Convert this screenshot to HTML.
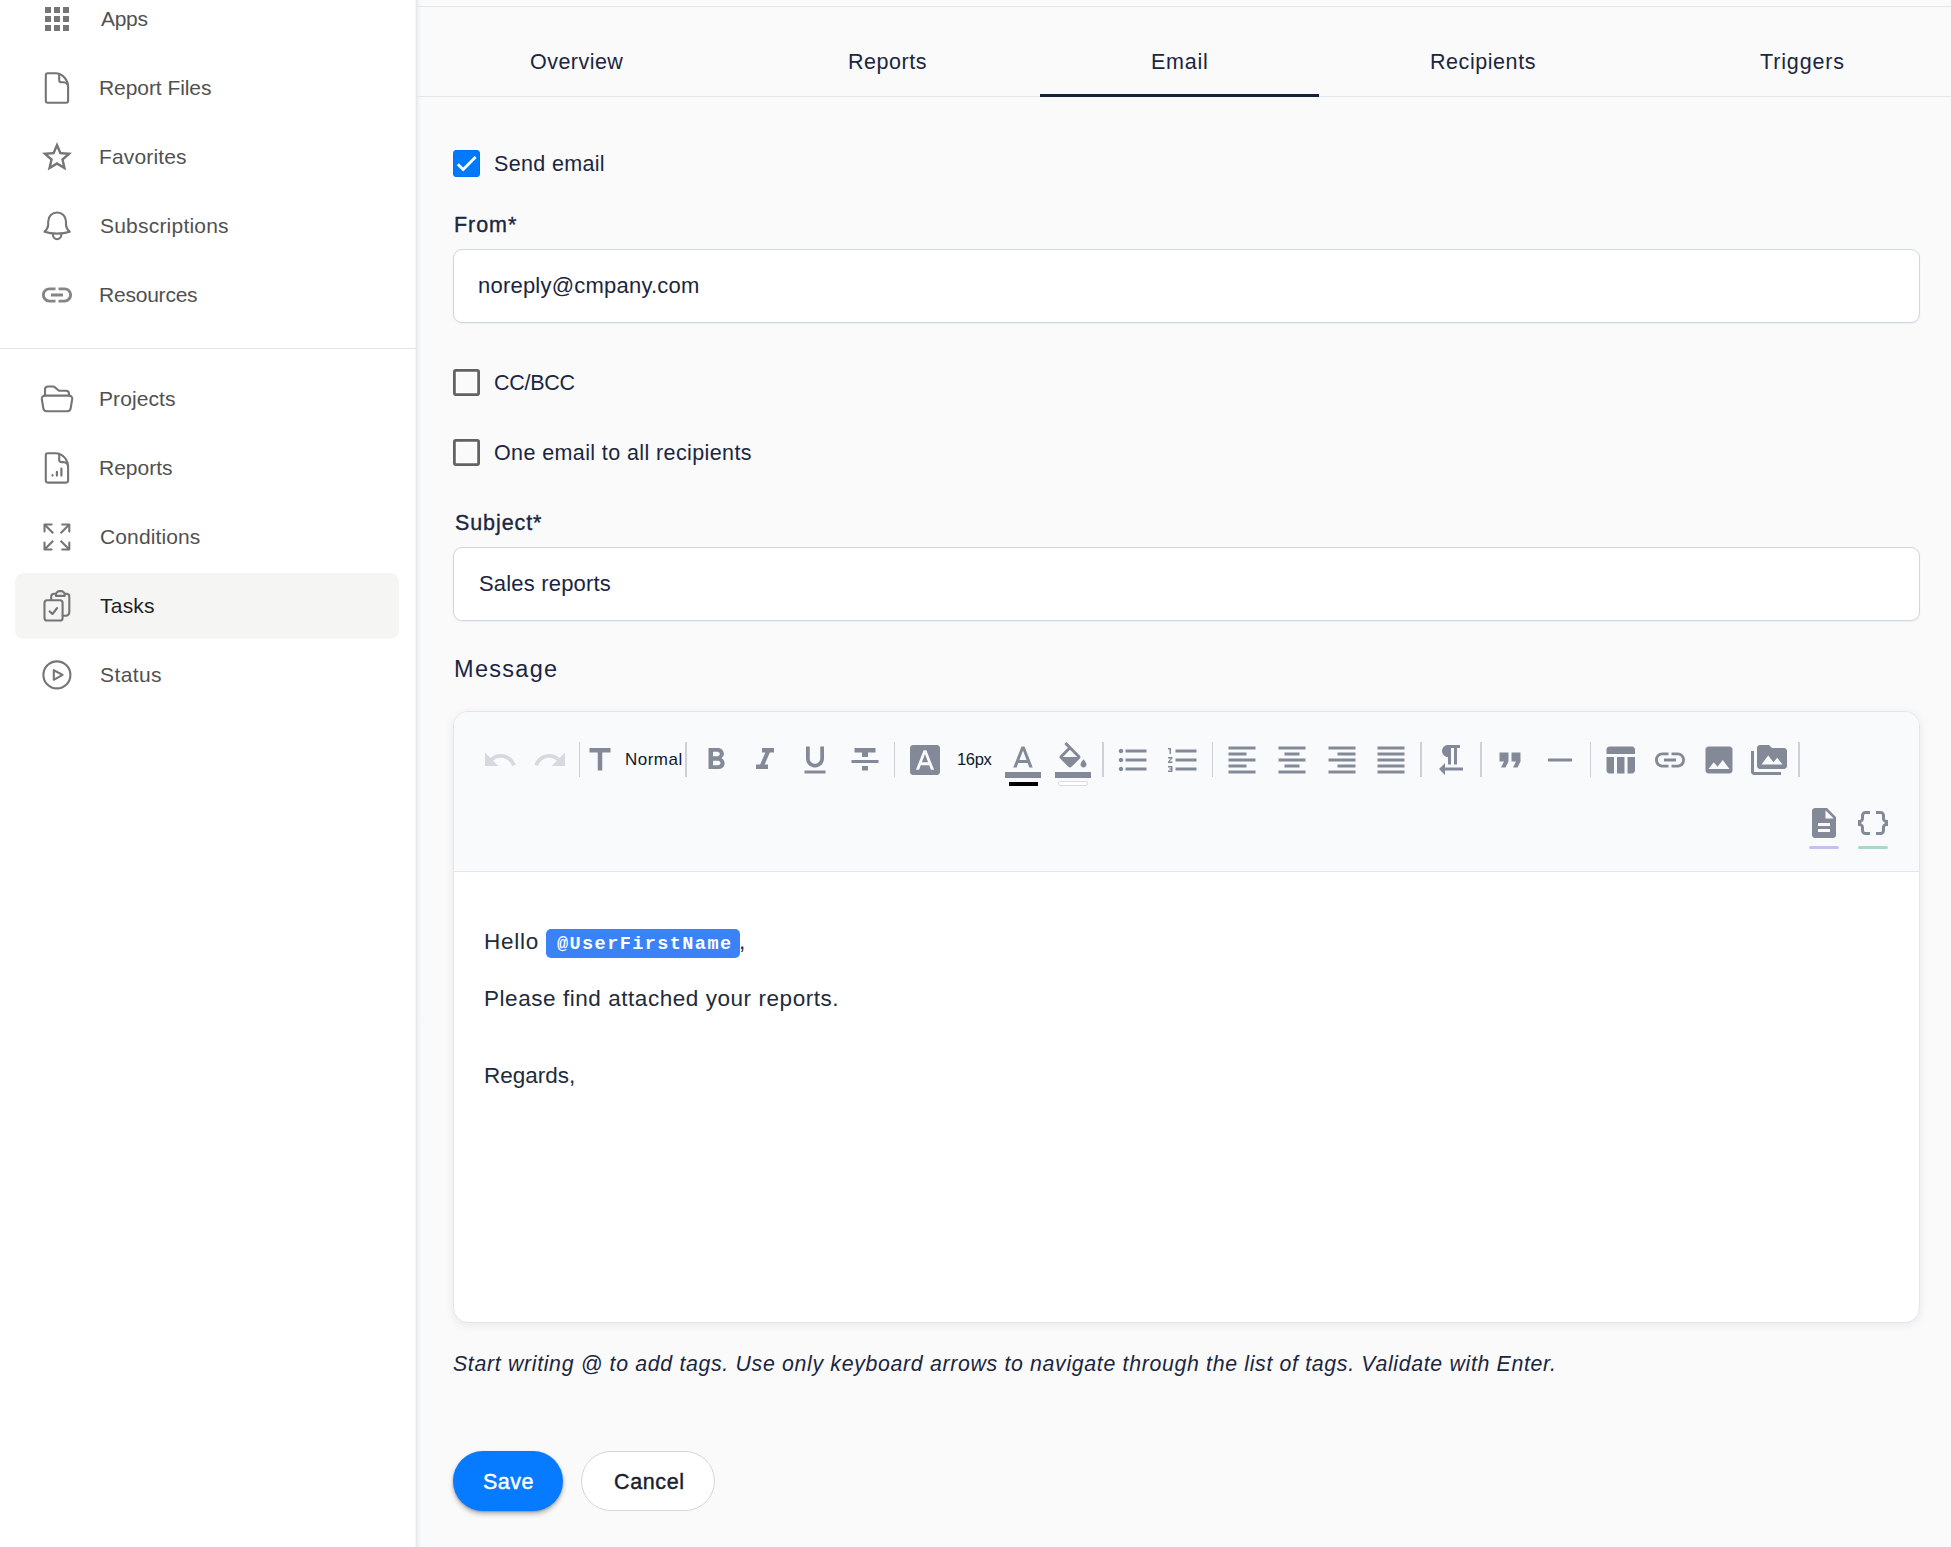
<!DOCTYPE html>
<html lang="en"><head><meta charset="utf-8"><title>Tasks - Email</title>
<style>
html,body{margin:0;padding:0}
body{width:1951px;height:1547px;position:relative;overflow:hidden;background:#fafafa;font-family:"Liberation Sans",sans-serif}
.t{position:absolute;white-space:pre;margin:0}
.ic{position:absolute;display:block;overflow:visible}
.abs{position:absolute;box-sizing:border-box}
.sep{position:absolute;top:742.3px;width:1.5px;height:35px;background:#cdd0d9}
.tag{position:absolute;background:#3b82f6;border-radius:5px}
.cb{position:absolute;box-sizing:border-box;width:27px;height:27px;border:2.2px solid #616161;border-radius:4px}
.inp{position:absolute;box-sizing:border-box;left:453px;width:1467px;height:73.5px;background:#fff;border:1px solid #ced7e4;border-radius:9px;box-shadow:0 1px 2px rgba(30,41,59,.06)}
</style></head><body>
<div class="abs" style="left:0;top:0;width:417px;height:1547px;background:#fff;border-right:1px solid #e2e8f0"></div>
<div class="abs" style="left:415px;top:0;width:1px;height:1547px;background:#f3f6f9"></div>
<div class="abs" style="left:417px;top:0;width:5px;height:1547px;background:linear-gradient(90deg,#eeeeef,#f6f6f6 45%,#fafafa)"></div>
<div class="abs" style="left:15px;top:573px;width:384px;height:66px;background:#f5f5f4;border-radius:8.5px"></div>
<div class="abs" style="left:0;top:348px;width:416px;height:1px;background:#e0e6ef"></div>
<div class="abs" style="left:417px;top:6px;width:1534px;height:1px;background:#e2e7ef"></div>
<div class="abs" style="left:417px;top:96px;width:1534px;height:1px;background:#e2e7ef"></div>
<div class="abs" style="left:1040px;top:94px;width:278.5px;height:3px;background:#16213a"></div>
<div class="abs" style="left:453px;top:150px;width:27px;height:27px;background:#0079fc;border:1.5px solid #0072fa;border-radius:3px"><svg width="27" height="27" viewBox="0 0 27 27" style="display:block;margin:-1.5px"><path d="M4.8 14.3L10.2 19.6L22.6 7.0" fill="none" stroke="#fff" stroke-width="2.8"/></svg></div>
<div class="inp" style="top:249.3px"></div>
<svg class="ic" style="left:453px;top:369px" width="27" height="27" viewBox="0 0 27 27"><rect x="3.4" y="3.4" width="20.2" height="20.2" fill="none" stroke="#fff" stroke-width="1.4"/><rect x="1.38" y="1.38" width="24.24" height="24.24" rx="1.5" fill="none" stroke="#626262" stroke-width="2.76"/></svg>
<svg class="ic" style="left:453px;top:439px" width="27" height="27" viewBox="0 0 27 27"><rect x="3.4" y="3.4" width="20.2" height="20.2" fill="none" stroke="#fff" stroke-width="1.4"/><rect x="1.38" y="1.38" width="24.24" height="24.24" rx="1.5" fill="none" stroke="#626262" stroke-width="2.76"/></svg>
<div class="inp" style="top:547.3px"></div>
<div class="abs" style="left:453px;top:711px;width:1467px;height:611.5px;background:#fff;border:1px solid #e2e6ec;border-radius:15px;box-shadow:0 2px 10px rgba(0,0,0,.075);overflow:hidden"><div style="height:159px;background:#f8fafc;border-bottom:1px solid #e2e6ec"></div></div>
<div class="abs" style="left:453px;top:1451px;width:110px;height:59.7px;background:#077bff;border-radius:30px;box-shadow:0 3px 5px rgba(0,0,0,.28),0 1px 2px rgba(0,0,0,.2)"></div>
<div class="abs" style="left:581.2px;top:1451px;width:133.6px;height:59.7px;background:#fff;border:1px solid #d6d6d6;border-radius:30px"></div>
<div class="t " style="left:101px;top:8px;font-size:21px;line-height:21px;color:#515151;font-family:'Liberation Sans',sans-serif;letter-spacing:-0.30px;">Apps</div>
<div class="t " style="left:99px;top:77px;font-size:21px;line-height:21px;color:#515151;font-family:'Liberation Sans',sans-serif;letter-spacing:-0.07px;">Report Files</div>
<div class="t " style="left:99px;top:146px;font-size:21px;line-height:21px;color:#515151;font-family:'Liberation Sans',sans-serif;letter-spacing:0.15px;">Favorites</div>
<div class="t " style="left:100px;top:215px;font-size:21px;line-height:21px;color:#515151;font-family:'Liberation Sans',sans-serif;letter-spacing:0.21px;">Subscriptions</div>
<div class="t " style="left:99px;top:284px;font-size:21px;line-height:21px;color:#515151;font-family:'Liberation Sans',sans-serif;letter-spacing:-0.22px;">Resources</div>
<div class="t " style="left:99px;top:388px;font-size:21px;line-height:21px;color:#515151;font-family:'Liberation Sans',sans-serif;letter-spacing:0.09px;">Projects</div>
<div class="t " style="left:99px;top:457px;font-size:21px;line-height:21px;color:#515151;font-family:'Liberation Sans',sans-serif;">Reports</div>
<div class="t " style="left:100px;top:526px;font-size:21px;line-height:21px;color:#515151;font-family:'Liberation Sans',sans-serif;letter-spacing:0.12px;">Conditions</div>
<div class="t " style="left:100px;top:595px;font-size:21px;line-height:21px;color:#1f1f1f;font-family:'Liberation Sans',sans-serif;letter-spacing:0.23px;">Tasks</div>
<div class="t " style="left:100px;top:664px;font-size:21px;line-height:21px;color:#515151;font-family:'Liberation Sans',sans-serif;letter-spacing:0.40px;">Status</div>
<div class="t " style="left:530px;top:52px;font-size:21.5px;line-height:21.5px;color:#1b2640;font-family:'Liberation Sans',sans-serif;letter-spacing:0.47px;">Overview</div>
<div class="t " style="left:848px;top:52px;font-size:21.5px;line-height:21.5px;color:#1b2640;font-family:'Liberation Sans',sans-serif;letter-spacing:0.55px;">Reports</div>
<div class="t " style="left:1151px;top:52px;font-size:21.5px;line-height:21.5px;color:#1b2640;font-family:'Liberation Sans',sans-serif;letter-spacing:0.75px;">Email</div>
<div class="t " style="left:1430px;top:52px;font-size:21.5px;line-height:21.5px;color:#1b2640;font-family:'Liberation Sans',sans-serif;letter-spacing:0.56px;">Recipients</div>
<div class="t " style="left:1760px;top:52px;font-size:21.5px;line-height:21.5px;color:#1b2640;font-family:'Liberation Sans',sans-serif;letter-spacing:0.86px;">Triggers</div>
<div class="t " style="left:494px;top:154px;font-size:21.5px;line-height:21.5px;color:#1b2640;font-family:'Liberation Sans',sans-serif;letter-spacing:0.34px;">Send email</div>
<div class="t " style="left:454px;top:215px;font-size:21.5px;line-height:21.5px;color:#1b2640;font-family:'Liberation Sans',sans-serif;letter-spacing:0.95px;-webkit-text-stroke:0.35px #1b2640;">From*</div>
<div class="t " style="left:478px;top:275px;font-size:22px;line-height:22px;color:#1b2640;font-family:'Liberation Sans',sans-serif;letter-spacing:0.22px;">noreply@cmpany.com</div>
<div class="t " style="left:494px;top:373px;font-size:21.5px;line-height:21.5px;color:#1b2640;font-family:'Liberation Sans',sans-serif;letter-spacing:-0.26px;">CC/BCC</div>
<div class="t " style="left:494px;top:443px;font-size:21.5px;line-height:21.5px;color:#1b2640;font-family:'Liberation Sans',sans-serif;letter-spacing:0.39px;">One email to all recipients</div>
<div class="t " style="left:455px;top:513px;font-size:21.5px;line-height:21.5px;color:#1b2640;font-family:'Liberation Sans',sans-serif;letter-spacing:0.91px;-webkit-text-stroke:0.35px #1b2640;">Subject*</div>
<div class="t " style="left:479px;top:573px;font-size:22px;line-height:22px;color:#1b2640;font-family:'Liberation Sans',sans-serif;letter-spacing:0.18px;">Sales reports</div>
<div class="t " style="left:454px;top:658px;font-size:23.5px;line-height:23.5px;color:#1b2640;font-family:'Liberation Sans',sans-serif;letter-spacing:1.30px;">Message</div>
<div class="t " style="left:625px;top:751px;font-size:17px;line-height:17px;color:#0f172a;font-family:'Liberation Sans',sans-serif;letter-spacing:0.48px;">Normal</div>
<div class="t " style="left:957px;top:751px;font-size:16.5px;line-height:16.5px;color:#0f172a;font-family:'Liberation Sans',sans-serif;letter-spacing:-0.33px;">16px</div>
<div class="t " style="left:484px;top:931px;font-size:22.5px;line-height:22.5px;color:#212b3a;font-family:'Liberation Sans',sans-serif;letter-spacing:0.72px;">Hello</div>
<div class="t " style="left:739px;top:931px;font-size:22.5px;line-height:22.5px;color:#212b3a;font-family:'Liberation Sans',sans-serif;">,</div>
<div class="t " style="left:484px;top:988px;font-size:22.5px;line-height:22.5px;color:#212b3a;font-family:'Liberation Sans',sans-serif;letter-spacing:0.55px;">Please find attached your reports.</div>
<div class="t " style="left:484px;top:1065px;font-size:22.5px;line-height:22.5px;color:#212b3a;font-family:'Liberation Sans',sans-serif;">Regards,</div>
<div class="tag" style="left:546px;top:929px;width:194px;height:28.8px"></div>
<div class="t " style="left:557px;top:936px;font-size:18.5px;line-height:18.5px;color:#fff;font-family:'Liberation Mono',monospace;letter-spacing:1.43px;font-weight:bold;">@UserFirstName</div>
<div class="t " style="left:453px;top:1354px;font-size:21.3px;line-height:21.3px;color:#1b2640;font-family:'Liberation Sans',sans-serif;letter-spacing:0.67px;font-style:italic;">Start writing @ to add tags. Use only keyboard arrows to navigate through the list of tags. Validate with Enter.</div>
<div class="t " style="left:483px;top:1472px;font-size:21.5px;line-height:21.5px;color:#fff;font-family:'Liberation Sans',sans-serif;letter-spacing:0.50px;-webkit-text-stroke:0.4px #fff;">Save</div>
<div class="t " style="left:614px;top:1472px;font-size:21.5px;line-height:21.5px;color:#16202f;font-family:'Liberation Sans',sans-serif;letter-spacing:0.64px;-webkit-text-stroke:0.4px #16202f;">Cancel</div>
<svg class="ic" style="left:481.8px;top:742.2px" width="36" height="36" viewBox="0 0 24 24"><path fill="#d6d9df" d="M12.5 8c-2.65 0-5.05.99-6.9 2.6L2 7v9h9l-3.62-3.62c1.39-1.16 3.16-1.88 5.12-1.88 3.54 0 6.55 2.31 7.6 5.5l2.37-.78C21.08 11.03 17.15 8 12.5 8z"/></svg>
<svg class="ic" style="left:531.6px;top:742.2px" width="36" height="36" viewBox="0 0 24 24"><path fill="#d6d9df" d="M18.4 10.6C16.55 8.99 14.15 8 11.5 8c-4.65 0-8.58 3.03-9.96 7.22L3.9 16c1.05-3.19 4.05-5.5 7.6-5.5 1.95 0 3.73.72 5.12 1.88L13 16h9V7l-3.6 3.6z"/></svg>
<svg class="ic" style="left:582.0px;top:742.2px" width="36" height="36" viewBox="0 0 24 24"><path fill="#848998" d="M5 4v3h5.5v12h3V7H19V4z"/></svg>
<svg class="ic" style="left:697.7px;top:742.2px" width="36" height="36" viewBox="0 0 24 24"><path fill="#848998" d="M15.6 10.79c.97-.67 1.65-1.77 1.65-2.79 0-2.26-1.75-4-4-4H7v14h7.04c2.09 0 3.71-1.7 3.71-3.79 0-1.52-.86-2.82-2.15-3.42zM10 6.5h3c.83 0 1.5.67 1.5 1.5s-.67 1.5-1.5 1.5h-3v-3zm3.5 9H10v-3h3.5c.83 0 1.5.67 1.5 1.5s-.67 1.5-1.5 1.5z"/></svg>
<svg class="ic" style="left:747.4px;top:742.2px" width="36" height="36" viewBox="0 0 24 24"><path fill="#848998" d="M10 4v3h2.21l-3.42 8H6v3h8v-3h-2.21l3.42-8H18V4z"/></svg>
<svg class="ic" style="left:797px;top:742.2px" width="36" height="36" viewBox="0 0 24 24"><path fill="#848998" d="M12 17c3.31 0 6-2.69 6-6V3h-2.5v8c0 1.93-1.57 3.5-3.5 3.5S8.5 12.93 8.5 11V3H6v8c0 3.31 2.69 6 6 6zm-7 2v2h14v-2H5z"/></svg>
<svg class="ic" style="left:846.7px;top:742.2px" width="36" height="36" viewBox="0 0 24 24"><path fill="#848998" d="M10 19h4v-3h-4v3zM5 4v3h5v3h4V7h5V4H5zM3 14h18v-2H3v2z"/></svg>
<svg class="ic" style="left:906.5px;top:742.2px" width="36" height="36" viewBox="0 0 24 24"><path fill="#848998" d="M9.93 13.5h4.14L12 7.98zM20 2H4c-1.1 0-2 .9-2 2v16c0 1.1.9 2 2 2h16c1.1 0 2-.9 2-2V4c0-1.1-.9-2-2-2zm-4.05 16.5l-1.14-3H9.17l-1.12 3H5.96l5.11-13h1.86l5.11 13h-2.09z"/></svg>
<svg class="ic" style="left:1005.2px;top:742.2px" width="36" height="36" viewBox="0 0 24 24"><path fill="#848998" d="M0 20h24v4H0zM11 3L5.5 17h2.25l1.12-3h6.25l1.12 3h2.25L13 3h-2zm-1.38 9L12 5.67 14.38 12H9.62z"/></svg>
<svg class="ic" style="left:1055px;top:742.2px" width="36" height="36" viewBox="0 0 24 24"><path fill="#848998" d="M16.56 8.94L7.62 0 6.21 1.41l2.38 2.38-5.15 5.15c-.59.59-.59 1.54 0 2.12l5.5 5.5c.29.29.68.44 1.06.44s.77-.15 1.06-.44l5.5-5.5c.59-.58.59-1.53 0-2.12zM5.21 10L10 5.21 14.79 10H5.21zM19 11.5s-2 2.17-2 3.5c0 1.1.9 2 2 2s2-.9 2-2c0-1.33-2-3.5-2-3.5zM0 20h24v4H0z"/></svg>
<svg class="ic" style="left:1114.8px;top:742.2px" width="36" height="36" viewBox="0 0 24 24"><path fill="#848998" d="M4 10.5c-.83 0-1.5.67-1.5 1.5s.67 1.5 1.5 1.5 1.5-.67 1.5-1.5-.67-1.5-1.5-1.5zm0-6c-.83 0-1.5.67-1.5 1.5S3.17 7.5 4 7.5 5.5 6.83 5.5 6 4.83 4.5 4 4.5zm0 12c-.83 0-1.5.68-1.5 1.5s.68 1.5 1.5 1.5 1.5-.68 1.5-1.5-.67-1.5-1.5-1.5zM7 19h14v-2H7v2zm0-6h14v-2H7v2zm0-8v2h14V5H7z"/></svg>
<svg class="ic" style="left:1164.5px;top:742.2px" width="36" height="36" viewBox="0 0 24 24"><path fill="#848998" d="M2 17h2v.5H3v1h1v.5H2v1h3v-4H2v1zm1-9h1V4H2v1h1v3zm-1 3h1.8L2 13.1v.9h3v-1H3.2L5 10.9V10H2v1zm5-6v2h14V5H7zm0 14h14v-2H7v2zm0-6h14v-2H7v2z"/></svg>
<svg class="ic" style="left:1224.3px;top:742.2px" width="36" height="36" viewBox="0 0 24 24"><path fill="#848998" d="M15 15H3v2h12v-2zm0-8H3v2h12V7zM3 13h18v-2H3v2zm0 8h18v-2H3v2zM3 3v2h18V3H3z"/></svg>
<svg class="ic" style="left:1273.7px;top:742.2px" width="36" height="36" viewBox="0 0 24 24"><path fill="#848998" d="M7 15v2h10v-2H7zm-4 6h18v-2H3v2zm0-8h18v-2H3v2zm4-6v2h10V7H7zM3 3v2h18V3H3z"/></svg>
<svg class="ic" style="left:1323.5px;top:742.2px" width="36" height="36" viewBox="0 0 24 24"><path fill="#848998" d="M3 21h18v-2H3v2zm6-4h12v-2H9v2zm-6-4h18v-2H3v2zm6-4h12V7H9v2zM3 3v2h18V3H3z"/></svg>
<svg class="ic" style="left:1372.9px;top:742.2px" width="36" height="36" viewBox="0 0 24 24"><path fill="#848998" d="M3 21h18v-2H3v2zm0-4h18v-2H3v2zm0-4h18v-2H3v2zm0-4h18V7H3v2zm0-6v2h18V3H3z"/></svg>
<svg class="ic" style="left:1433px;top:742.2px" width="36" height="36" viewBox="0 0 24 24"><path fill="#848998" d="M10 10v5h2V4h2v11h2V4h2V2h-8C7.79 2 6 3.79 6 6s1.79 4 4 4zm-2 7v-3l-4 4 4 4v-3h12v-2H8z"/></svg>
<svg class="ic" style="left:1492.4px;top:742.2px" width="36" height="36" viewBox="0 0 24 24"><path fill="#848998" d="M6 17h3l2-4V7H5v6h3zm8 0h3l2-4V7h-6v6h3z"/></svg>
<svg class="ic" style="left:1542.1px;top:742.2px" width="36" height="36" viewBox="0 0 24 24"><path fill="#848998" d="M4 11h16v2H4z"/></svg>
<svg class="ic" style="left:1602.3px;top:742.2px" width="36" height="36" viewBox="0 0 24 24"><path fill="#848998" d="M10 10.02h5V21h-5zM17 21h3c1.1 0 2-.9 2-2v-9h-5v11zm3-18H5c-1.1 0-2 .9-2 2v3h19V5c0-1.1-.9-2-2-2zM3 19c0 1.1.9 2 2 2h3V10H3v9z"/></svg>
<svg class="ic" style="left:1652px;top:742.2px" width="36" height="36" viewBox="0 0 24 24"><path fill="#848998" d="M3.9 12c0-1.71 1.39-3.1 3.1-3.1h4V7H7c-2.76 0-5 2.24-5 5s2.24 5 5 5h4v-1.9H7c-1.71 0-3.1-1.39-3.1-3.1zM8 13h8v-2H8v2zm9-6h-4v1.9h4c1.71 0 3.1 1.39 3.1 3.1s-1.39 3.1-3.1 3.1h-4V17h4c2.76 0 5-2.24 5-5s-2.24-5-5-5z"/></svg>
<svg class="ic" style="left:1701.3px;top:742.2px" width="36" height="36" viewBox="0 0 24 24"><path fill="#848998" d="M21 19V5c0-1.1-.9-2-2-2H5c-1.1 0-2 .9-2 2v14c0 1.1.9 2 2 2h14c1.1 0 2-.9 2-2zM8.5 13.5l2.5 3.01L14.5 12l4.5 6H5l3.5-4.5z"/></svg>
<svg class="ic" style="left:1751px;top:742.2px" width="36" height="36" viewBox="0 0 24 24"><path fill="#848998" d="M2 6H0v5h.01L0 20c0 1.1.9 2 2 2h18v-2H2V6zm20-2h-8l-2-2H6c-1.1 0-1.99.9-1.99 2L4 16c0 1.1.9 2 2 2h16c1.1 0 2-.9 2-2V6c0-1.1-.9-2-2-2zM7 15l4.5-6 3.5 4.51 2.5-3.01L21 15H7z"/></svg>
<svg class="ic" style="left:1806px;top:804.9px" width="36" height="36" viewBox="0 0 24 24"><path fill="#848998" d="M14 2H6c-1.1 0-1.99.9-1.99 2L4 20c0 1.1.89 2 1.99 2H18c1.1 0 2-.9 2-2V8l-6-6zm2 16H8v-2h8v2zm0-4H8v-2h8v2zm-3-5V3.5L18.5 9H13z"/></svg>
<svg class="ic" style="left:1855px;top:804.9px" width="36" height="36" viewBox="0 0 24 24"><path fill="#848998" d="M4 7v2c0 .55-.45 1-1 1H2v4h1c.55 0 1 .45 1 1v2c0 1.65 1.35 3 3 3h3v-2H7c-.55 0-1-.45-1-1v-2c0-1.3-.84-2.42-2-2.83v-.34C5.16 11.42 6 10.3 6 9V7c0-.55.45-1 1-1h3V4H7C5.35 4 4 5.35 4 7zm17 3c-.55 0-1-.45-1-1V7c0-1.65-1.35-3-3-3h-3v2h3c.55 0 1 .45 1 1v2c0 1.3.84 2.42 2 2.83v.34c-1.16.41-2 1.52-2 2.83v2c0 .55-.45 1-1 1h-3v2h3c1.65 0 3-1.35 3-3v-2c0-.55.45-1 1-1h1v-4h-1z"/></svg>
<div class="sep" style="left:578.75px"></div>
<div class="sep" style="left:685.25px"></div>
<div class="sep" style="left:893.75px"></div>
<div class="sep" style="left:1102.25px"></div>
<div class="sep" style="left:1211.85px"></div>
<div class="sep" style="left:1420.05px"></div>
<div class="sep" style="left:1480.25px"></div>
<div class="sep" style="left:1589.75px"></div>
<div class="sep" style="left:1798.25px"></div>
<div style="position:absolute;left:1009px;top:782px;width:28.5px;height:3.5px;background:#000"></div>
<div style="position:absolute;left:1058px;top:781.4px;width:30px;height:4.6px;background:#fff;border:1px solid #d9dbe0;border-radius:2px;box-sizing:border-box"></div>
<div style="position:absolute;left:1809px;top:846px;width:30px;height:3px;background:#c5c0f0;border-radius:2px"></div>
<div style="position:absolute;left:1858px;top:846px;width:30px;height:3px;background:#a9d8c9;border-radius:2px"></div>
<svg class="ic" style="left:39px;top:1px" width="36" height="36" viewBox="0 0 24 24"><path fill="#757575" d="M4 8h4V4H4v4zm6 12h4v-4h-4v4zm-6 0h4v-4H4v4zm0-6h4v-4H4v4zm6 0h4v-4h-4v4zm6-10v4h4V4h-4zm-6 4h4V4h-4v4zm6 6h4v-4h-4v4zm0 6h4v-4h-4v4z"/></svg>
<svg class="ic" style="left:39px;top:139px" width="36" height="36" viewBox="0 0 24 24"><path fill="#757575" d="M22 9.24l-7.19-.62L12 2 9.19 8.63 2 9.24l5.46 4.73L5.82 21 12 17.27 18.18 21l-1.63-7.03L22 9.24zM12 15.4l-3.76 2.27 1-4.28-3.32-2.88 4.38-.38L12 6.1l1.71 4.04 4.38.38-3.32 2.88 1 4.28L12 15.4z"/></svg>
<svg class="ic" style="left:39px;top:277px" width="36" height="36" viewBox="0 0 24 24"><path fill="#858585" d="M3.9 12c0-1.71 1.39-3.1 3.1-3.1h4V7H7c-2.76 0-5 2.24-5 5s2.24 5 5 5h4v-1.9H7c-1.71 0-3.1-1.39-3.1-3.1zM8 13h8v-2H8v2zm9-6h-4v1.9h4c1.71 0 3.1 1.39 3.1 3.1s-1.39 3.1-3.1 3.1h-4V17h4c2.76 0 5-2.24 5-5s-2.24-5-5-5z"/></svg>
<svg class="ic" style="left:0;top:0" width="416" height="720" viewBox="0 0 416 720" fill="none" stroke="#757575" stroke-width="2.1" stroke-linecap="round" stroke-linejoin="round">
<g id="doc1"><path d="M47.8 73.3H55.5C62.5 73.3 68.1 80 68.1 87V100.7a2 2 0 0 1-2 2H47.8a2 2 0 0 1-2-2V75.3a2 2 0 0 1 2-2z"/><path d="M59.2 74V80.2a2 2 0 0 0 2 2H63.5c2.5 0 4.6 2 4.6 4.8"/></g>
<g transform="translate(0 379.9)"><path d="M47.8 73.3H55.5C62.5 73.3 68.1 80 68.1 87V100.7a2 2 0 0 1-2 2H47.8a2 2 0 0 1-2-2V75.3a2 2 0 0 1 2-2z"/><path d="M59.2 74V80.2a2 2 0 0 0 2 2H63.5c2.5 0 4.6 2 4.6 4.8"/></g>
<path d="M52.5 475.2v.4M56.9 471.8v3.8M61.4 468.6v7" stroke-width="2.2"/>
<path d="M48.2 221.4a8.9 8.9 0 0 1 17.8 0v3c0 3.2 1.5 5.2 3.7 7.4c-4 1.3-8.2 1.8-12.6 1.8s-8.6-.5-12.6-1.8c2.2-2.2 3.7-4.2 3.7-7.4z"/>
<path d="M52.9 234.6a4.2 4.6 0 0 0 8.4 0"/>
<path d="M45 395.6V389.5a3 3 0 0 1 3-3H53.2a2 2 0 0 1 1.5.65L58.4 390.2a2 2 0 0 0 1.5.6H66a3 3 0 0 1 3 3V395.6"/>
<path d="M44.8 395.6H69.2a3 3 0 0 1 3 3.4L70.7 408.2a3.5 3.5 0 0 1-3.5 3.1H46.8a3.5 3.5 0 0 1-3.5-3.1L41.8 399a3 3 0 0 1 3-3.4z"/>
<g stroke-width="2.1"><path d="M51.6 524.5H44.5V531.4M69.3 531.4V524.5H62.2M51.6 549.5H44.5V542.6M62.2 549.5H69.3V542.6"/><path stroke-linecap="butt" d="M44.5 524.5L53.2 533.2M69.3 524.5L60.6 533.2M44.5 549.5L53.2 540.8M69.3 549.5L60.6 540.8"/></g>
<rect x="44.5" y="600.2" width="18.1" height="20.3" rx="2.6"/>
<path d="M51.2 600V596.8a3 3 0 0 1 3-3H55.6M65 593.8H66.3a3 3 0 0 1 3 3V612.2a3.5 3.5 0 0 1-3.5 3.5H62.8"/>
<path d="M55.9 595.9V595a3.9 3.9 0 0 1 3.9-3.9h1a3.9 3.9 0 0 1 3.9 3.9V595.9z"/>
<path d="M49.6 611.4L52.5 614L57.1 608"/>
<circle cx="56.9" cy="674.9" r="13.5"/>
<path d="M53.8 670.2V679.8L62.6 674.9z"/>
</svg>
</body></html>
